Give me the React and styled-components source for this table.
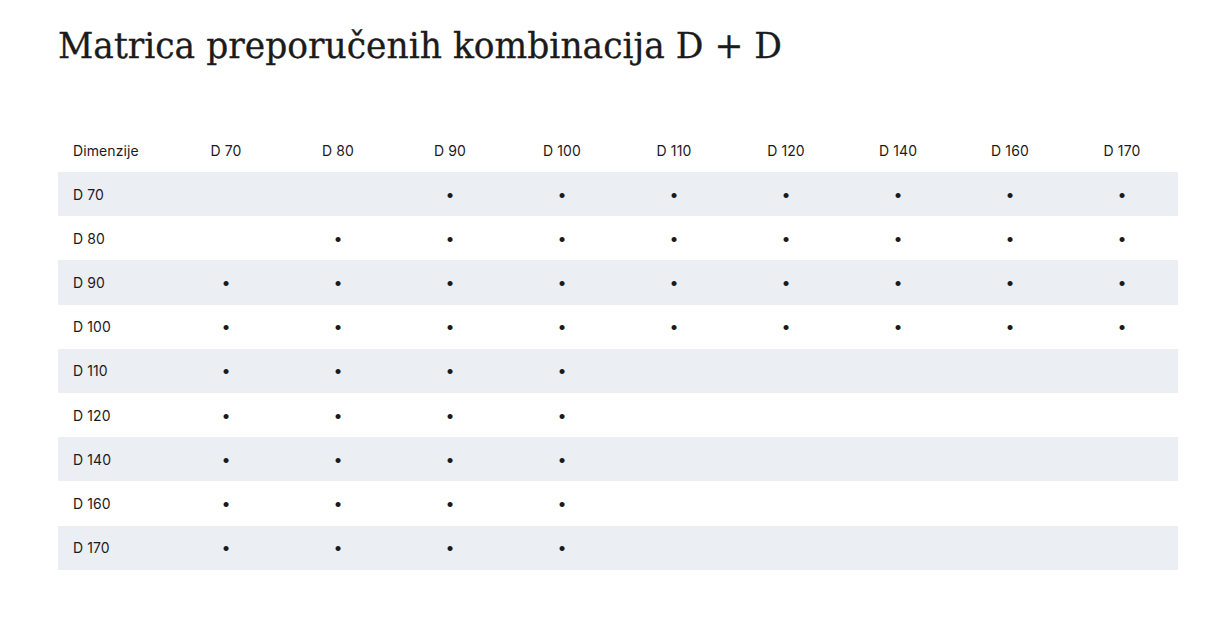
import React from "react";
import styled, { createGlobalStyle } from "styled-components";

const GlobalStyle = createGlobalStyle`
  html, body { margin: 0; padding: 0; background: #ffffff; }
  body { font-family: Inter, "Noto Sans", sans-serif; color: #1b1b1b; }
`;

const Page = styled.main`
  padding: 22px 54px 0 58px;
  display: flex;
  flex-direction: column;
`;

const Title = styled.h1`
  margin: 0;
  font-family: "DejaVu Serif", "Liberation Serif", serif;
  font-weight: 400;
  font-size: 34.5px;
  line-height: 48px;
  letter-spacing: 0;
  color: #1b1b1b;
  -webkit-text-stroke: 0.3px #1b1b1b;
`;

const Table = styled.table`
  margin-top: 58px;
  width: 1120px;
  border-collapse: collapse;
  table-layout: fixed;
  font-size: 14px;
`;

const HeadCell = styled.th`
  height: 44px;
  padding: 0 ${(p) => (p.$first ? "15px" : "0")};
  font-weight: 400;
  text-align: ${(p) => (p.$first ? "left" : "center")};
  font-size: 14px;
  letter-spacing: 0.1px;
  color: #1b1b1b;
`;

const Row = styled.tr`
  background: ${(p) => (p.$shaded ? "#ebeff3" : "#ffffff")};
`;

const Cell = styled.td`
  height: 44.2px;
  padding: 0 ${(p) => (p.$first ? "15px" : "0")};
  text-align: ${(p) => (p.$first ? "left" : "center")};
  font-size: 14px;
  letter-spacing: 0.1px;
  color: #1b1b1b;
`;

const Dot = styled.span`
  font-size: 16px;
  line-height: 1;
  font-weight: 700;
  color: #1b1b1b;
`;

const sizes = [70, 80, 90, 100, 110, 120, 140, 160, 170];

const combos = {
  70: [90, 100, 110, 120, 140, 160, 170],
  80: [80, 90, 100, 110, 120, 140, 160, 170],
  90: [70, 80, 90, 100, 110, 120, 140, 160, 170],
  100: [70, 80, 90, 100, 110, 120, 140, 160, 170],
  110: [70, 80, 90, 100],
  120: [70, 80, 90, 100],
  140: [70, 80, 90, 100],
  160: [70, 80, 90, 100],
  170: [70, 80, 90, 100],
};

export default function App() {
  return (
    <Page>
      <GlobalStyle />
      <Title>Matrica preporučenih kombinacija D + D</Title>
      <Table>
        <thead>
          <tr>
            <HeadCell $first>Dimenzije</HeadCell>
            {sizes.map((s) => (
              <HeadCell key={s}>D {s}</HeadCell>
            ))}
          </tr>
        </thead>
        <tbody>
          {sizes.map((row, i) => (
            <Row key={row} $shaded={i % 2 === 0}>
              <Cell $first>D {row}</Cell>
              {sizes.map((col) => (
                <Cell key={col}>{combos[row].includes(col) ? <Dot>•</Dot> : null}</Cell>
              ))}
            </Row>
          ))}
        </tbody>
      </Table>
    </Page>
  );
}
